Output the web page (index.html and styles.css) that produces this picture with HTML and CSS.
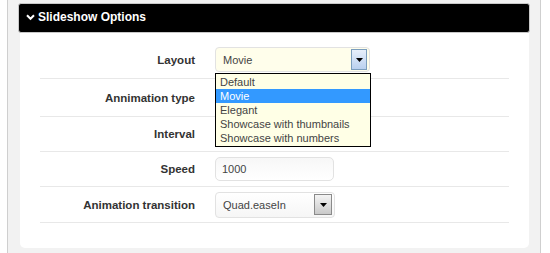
FILE: index.html
```html
<!DOCTYPE html>
<html>
<head>
<meta charset="utf-8">
<link rel="stylesheet" href="styles.css">
</head>
<body>
<div class="outer">
  <div class="header">
    <svg class="chev" width="9" height="7" viewBox="0 0 9 7"><path d="M1 1.2 L4.5 4.8 L8 1.2" fill="none" stroke="#fff" stroke-width="2"/></svg>
    <span>Slideshow Options</span>
  </div>
  <div class="panel">
    <div class="row tall">
      <div class="label">Layout</div>
      <div class="ctrl">
        <div class="select yellow wide">
          <span>Movie</span>
          <span class="btn blue"><svg width="7" height="4" viewBox="0 0 7 4"><path d="M0 0 H7 L3.5 4 Z" fill="#000"/></svg></span>
        </div>
        <ul class="list">
          <li>Default</li>
          <li class="sel">Movie</li>
          <li>Elegant</li>
          <li>Showcase with thumbnails</li>
          <li>Showcase with numbers</li>
        </ul>
      </div>
    </div>
    <div class="row tall">
      <div class="label">Annimation type</div>
      <div class="ctrl"></div>
    </div>
    <div class="row">
      <div class="label">Interval</div>
      <div class="ctrl"></div>
    </div>
    <div class="row">
      <div class="label">Speed</div>
      <div class="ctrl"><div class="input">1000</div></div>
    </div>
    <div class="row mid">
      <div class="label">Animation transition</div>
      <div class="ctrl">
        <div class="select gray narrow">
          <span>Quad.easeIn</span>
          <span class="btn grey"><svg width="7" height="4" viewBox="0 0 7 4"><path d="M0 0 H7 L3.5 4 Z" fill="#000"/></svg></span>
        </div>
      </div>
    </div>
  </div>
</div>
</body>
</html>
```
FILE: styles.css
```css
html, body {
  margin: 0;
  padding: 0;
  background: #fff;
  font-family: "Liberation Sans", Arial, sans-serif;
}
.outer {
  margin: 0 7px 0 7px;
  width: 534px;
  height: 253px;
  box-sizing: border-box;
  border-left: 1px solid #cfcfcf;
  border-right: 1px solid #cfcfcf;
  background: #f2f2f2;
  padding: 3px 10px 0 10px;
}
.header {
  height: 30px;
  background: #000;
  border: 1px solid #c8c8c8;
  border-radius: 3px;
  display: flex;
  align-items: center;
  color: #fff;
  font-weight: bold;
  font-size: 12px;
  box-sizing: border-box;
  padding-left: 7px;
  gap: 3px;
}
.header span { position: relative; top: -1px; }
.chev { position: relative; top: -1px; }
.panel {
  margin: 0 1px 0 2px;
  background: #fff;
  border-radius: 0 0 5px 5px;
  height: 215px;
  padding: 8px 20px 0 20px;
  box-sizing: border-box;
}
.row {
  display: flex;
  align-items: center;
  height: 35px;
  border-bottom: 1px solid #e8e8e8;
  box-sizing: border-box;
}
.row.tall { height: 38px; }
.row.mid { height: 36px; }
.label {
  width: 155px;
  text-align: right;
  font-weight: bold;
  font-size: 11.5px;
  color: #333;
  padding-top: 0;
}
.ctrl {
  margin-left: 20px;
  position: relative;
  height: 100%;
  display: flex;
  align-items: center;
}
.select {
  display: flex;
  align-items: center;
  justify-content: space-between;
  box-sizing: border-box;
  border: 1px solid #e2e2e2;
  border-radius: 4px;
  font-size: 11px;
  color: #444;
  padding-left: 7px;
}
.select.yellow {
  background: #fffeeb;
  width: 155px;
  height: 25px;
  padding-right: 2px;
}
.select.gray {
  background: linear-gradient(#fff, #f6f6f6);
  width: 120px;
  height: 26px;
  padding-right: 2px;
}
.btn {
  display: flex;
  align-items: center;
  justify-content: center;
  box-sizing: border-box;
}
.btn.blue {
  width: 16px;
  height: 21px;
  border: 1px solid #7b9ebd;
  background: linear-gradient(#e8f0fb, #b9d0ef);
}
.btn.grey {
  width: 18px;
  height: 21px;
  border: 1px solid #8a8a8a;
  background: linear-gradient(#f4f4f4, #c9c9c9);
}
.list {
  position: absolute;
  left: 0;
  top: 32px;
  width: 156px;
  margin: 0;
  padding: 1px 0;
  list-style: none;
  background: #ffffe6;
  border: 1px solid #000;
  box-sizing: border-box;
  font-size: 11px;
  color: #444;
  z-index: 2;
}
.list li {
  height: 14px;
  line-height: 14px;
  padding-left: 4px;
}
.list li.sel {
  background: #3399ff;
  color: #fff;
}
.input {
  width: 119px;
  height: 24px;
  box-sizing: border-box;
  border: 1px solid #e2e2e2;
  border-radius: 5px;
  background: linear-gradient(#f7f7f7, #fff);
  font-size: 11px;
  color: #444;
  display: flex;
  align-items: center;
  padding-left: 6px;
}
```
